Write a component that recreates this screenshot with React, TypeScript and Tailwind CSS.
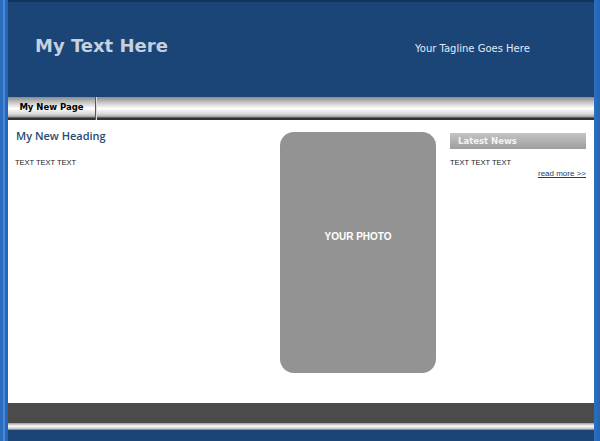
export default function App() {
  return (
    <div className="w-[600px] h-[441px] flex bg-[#1b4577] overflow-hidden" style={{ fontFamily: '"Liberation Sans", Arial, sans-serif' }}>
      <div className="w-[8px] h-full flex">
        <div className="w-[3px] bg-[#2a6cbd]" />
        <div className="w-[2px] bg-[#4d8ad6]" />
        <div className="w-[3px] bg-[#2566b8]" />
      </div>
      <div className="flex-1 flex flex-col">
        <div className="h-[2px] bg-[#10335c]" />
        <div className="h-[95px] bg-[#1b4577] flex items-start">
          <div className="pl-[27px] pt-[30px] text-[18px] font-bold text-[#c6d0de] w-[400px]" style={{ fontFamily: '"DejaVu Sans", Verdana, sans-serif' }}>My Text Here</div>
          <div className="pt-[39px] pl-[7px] text-[10px] text-[#e3ebf5]" style={{ fontFamily: '"DejaVu Sans", Verdana, sans-serif' }}>Your Tagline Goes Here</div>
        </div>
        <div className="h-[23px] flex bg-[linear-gradient(to_bottom,#8a8a8a_0%,#c9c9c9_25%,#ffffff_50%,#d6d6d6_75%,#9a9a9a_88%,#333_90%,#333_100%)]">
          <div className="w-[88px] border-r border-[#555] flex items-center justify-center pb-[2px] text-[8.5px] font-bold text-black" style={{ fontFamily: '"DejaVu Sans", Verdana, sans-serif' }}>My New Page</div>
          <div className="flex-1 border-l border-[#ddd]" />
        </div>
        <div className="h-[283px] bg-white flex px-[8px] pt-[9px]">
          <div className="w-[264px] flex flex-col">
            <div className="text-[11px] font-semibold text-[#2b4b72] leading-[14px]" style={{ fontFamily: '"Open Sans", Verdana, sans-serif' }}>My New Heading</div>
            <div className="text-[7.5px] text-[#222] mt-[15px] leading-[10px] -ml-[1px]">TEXT TEXT TEXT</div>
          </div>
          <div className="w-[156px] h-[241px] mt-[3px] rounded-[14px] bg-[#939393] flex items-center justify-center pb-[32px]">
            <span className="text-[10px] font-bold text-white">YOUR PHOTO</span>
          </div>
          <div className="flex-1 pl-[14px] pt-[4px] flex flex-col">
            <div className="h-[16px] bg-[linear-gradient(to_bottom,#c4c4c4,#9e9e9e)] flex items-center pl-[8px] text-[8.5px] font-bold text-[#f4f4f4]" style={{ fontFamily: '"DejaVu Sans", Verdana, sans-serif' }}>Latest News</div>
            <div className="text-[7.5px] text-[#222] mt-[9px] leading-[10px]">TEXT TEXT TEXT</div>
            <div className="text-[8px] text-[#1d3d6b] underline text-right mt-[1px] leading-[10px]">read more &gt;&gt;</div>
          </div>
        </div>
        <div className="h-[20px] bg-[#4b4b4b]" />
        <div className="h-[7px] bg-[linear-gradient(to_bottom,#9a9a9a,#ffffff_45%,#c4c4c4_80%,#777)]" />
        <div className="flex-1 bg-[#1b4577]" />
      </div>
      <div className="w-[6px] h-full flex">
        <div className="w-[3px] bg-[#2a6cbd]" />
        <div className="w-[3px] bg-[#2566b8]" />
      </div>
    </div>
  );
}
